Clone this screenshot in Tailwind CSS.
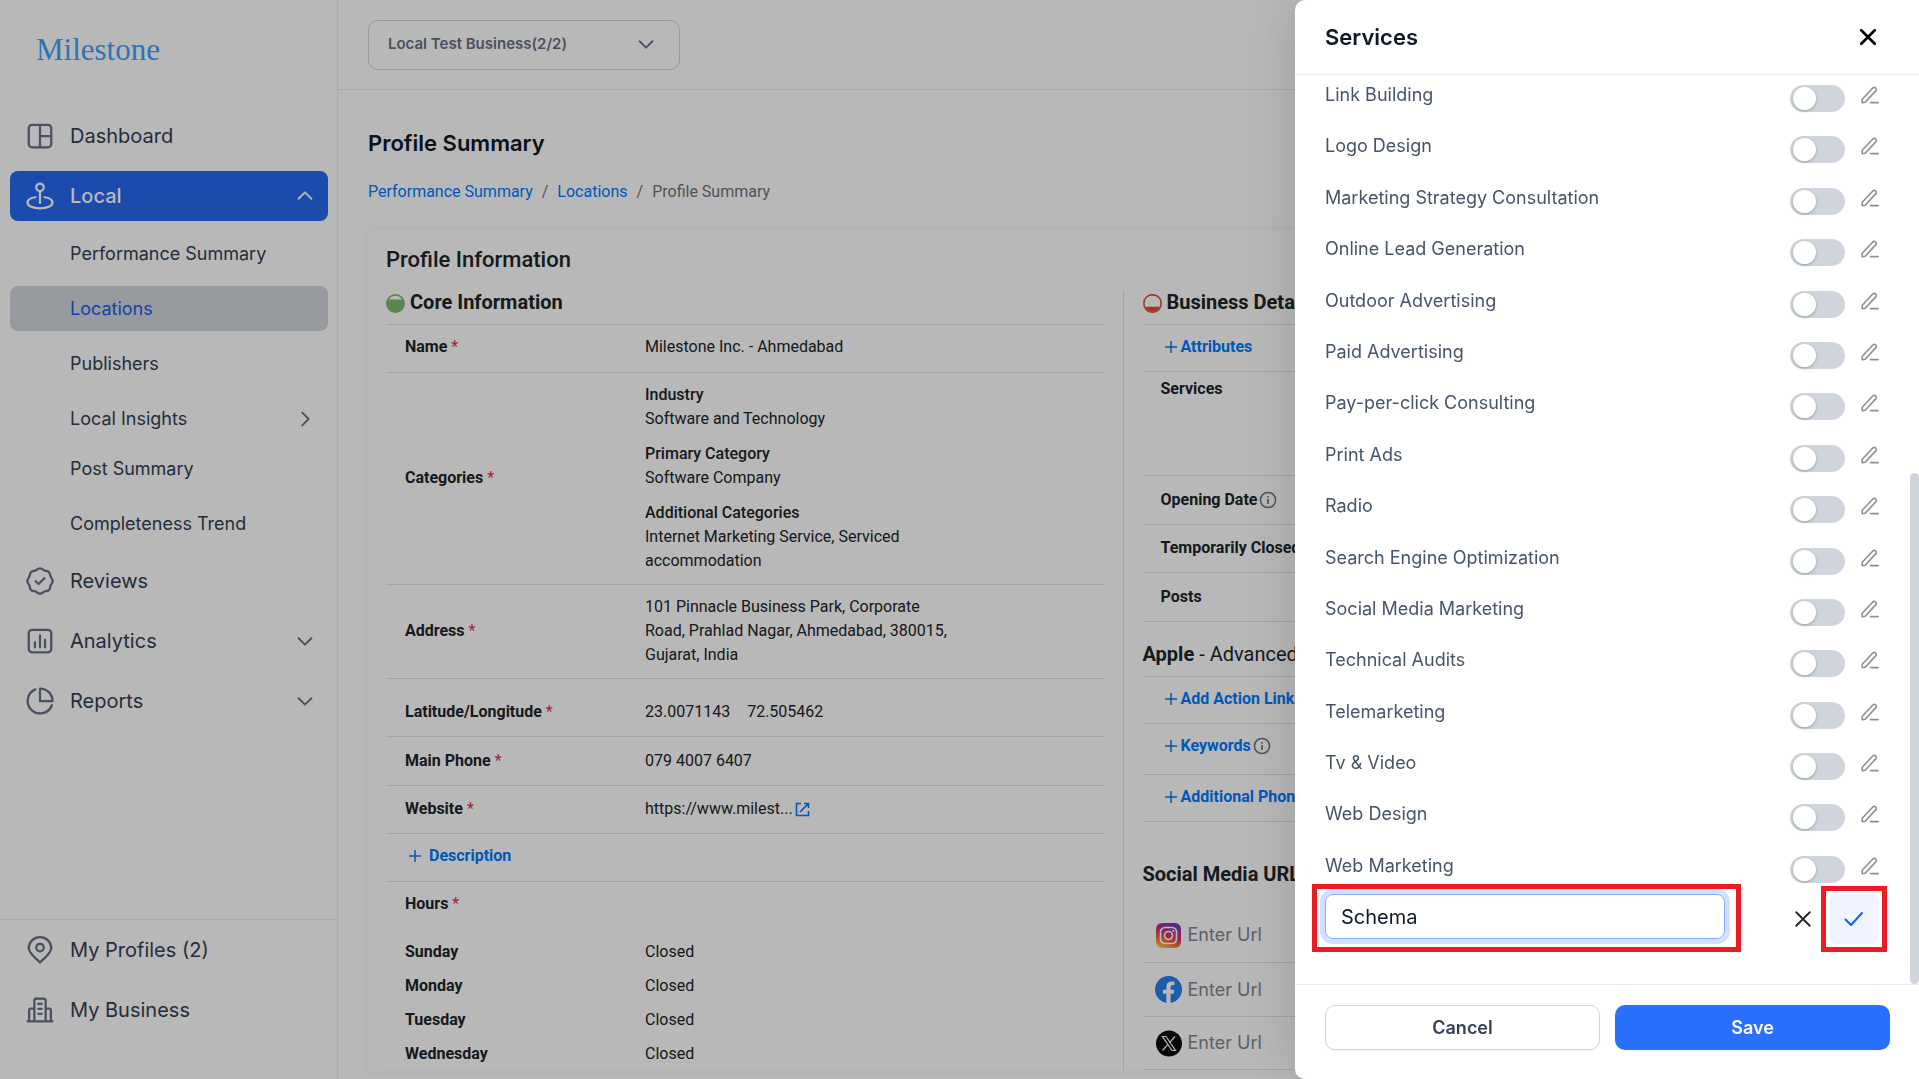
<!DOCTYPE html>
<html lang="en">
<head>
<meta charset="utf-8">
<meta name="viewport" content="width=device-width, initial-scale=1">
<title>Profile Summary</title>
<script src="https://cdn.jsdelivr.net/npm/@tailwindcss/browser@4"></script>
</head>
<body class="h-screen overflow-hidden bg-white font-['Roboto',sans-serif] text-[#212529]">
<svg class="hidden" aria-hidden="true">
  <symbol id="down" viewBox="0 0 24 24"><path d="M5 9l7 7 7-7" fill="none" stroke="currentColor" stroke-width="2" stroke-linecap="round" stroke-linejoin="round"/></symbol>
  <symbol id="plus" viewBox="0 0 12 12"><path d="M6 0v12M0 6h12" fill="none" stroke="currentColor" stroke-width="1.5"/></symbol>
  <symbol id="info" viewBox="0 0 18 18"><circle cx="9" cy="9" r="7.600" fill="none" stroke="currentColor" stroke-width="1.500"/><path d="M9 8v5M9 5v1.600" stroke="currentColor" stroke-width="1.700"/></symbol>
  <symbol id="cross" viewBox="0 0 16 16"><path d="M2 2l12 12M14 2L2 14" fill="none" stroke="currentColor" stroke-linecap="round"/></symbol>
  <symbol id="pencil" viewBox="0 0 20 20"><path d="M2.200 17.600v-3.400L12.800 3a2 2 0 0 1 2.900 0 2 2 0 0 1 0 2.900L5.200 17.200z M10.500 17.600h7.600" fill="none" stroke="currentColor" stroke-width="1.600" stroke-linecap="round" stroke-linejoin="round"/></symbol>
</svg>

<div class="flex h-full">
  <!-- Sidebar -->
  <aside class="flex w-[338px] shrink-0 flex-col border-r border-[#eaecf0] font-['Inter',sans-serif] text-[#344054]">
    <a href="#" class="flex h-[111px] items-start pt-[30px] pl-[36px] font-['Liberation_Serif',serif] text-[31px] leading-[40px] text-[#3ca1ff]">Milestone</a>
    <nav class="flex flex-1 flex-col gap-[10px] pr-[9px] pl-[10px] text-[20px]">
      <a href="#" class="flex h-[50px] shrink-0 items-center gap-[15px] pl-[15px]">
        <svg class="size-[30px] text-[#667085]" viewBox="0 0 24 24" fill="none" stroke="currentColor" stroke-width="1.800" stroke-linejoin="round"><rect x="3" y="3" width="18" height="18" rx="2.600"/><path d="M12 3v18M12 12h9"/></svg>Dashboard</a>
      <a href="#" class="flex h-[50px] shrink-0 items-center gap-[15px] rounded-lg bg-[#2468f0] px-[12px] pl-[15px] font-medium text-white">
        <svg class="size-[30px]" viewBox="0 0 24 24" fill="none" stroke="currentColor" stroke-width="1.800" stroke-linecap="round"><circle cx="12" cy="5" r="3"/><path d="M12 8v9.500M8.500 13C4.700 13.500 2 15 2 17.200 2 20 6.500 21.800 12 21.800s10-1.800 10-4.600c0-2.200-2.700-3.700-6.500-4.200"/></svg>
        <span class="flex-1">Local</span>
        <svg class="size-[22px] rotate-180"><use href="#down"/></svg></a>
      <div class="flex flex-col gap-[10px] text-[18px]">
        <a href="#" class="flex h-[45px] items-center pl-[60px]">Performance Summary</a>
        <a href="#" class="flex h-[45px] items-center rounded-lg bg-[#d2d6dc] pl-[60px] text-[#155eef]">Locations</a>
        <a href="#" class="flex h-[45px] items-center pl-[60px]">Publishers</a>
        <div class="flex flex-col gap-[5px]">
          <a href="#" class="flex h-[45px] items-center justify-between pr-[12px] pl-[60px]">Local Insights<svg class="size-[22px] -rotate-90 text-[#667085]"><use href="#down"/></svg></a>
          <a href="#" class="flex h-[45px] items-center pl-[60px]">Post Summary</a>
        </div>
        <a href="#" class="flex h-[45px] items-center pl-[60px]">Completeness Trend</a>
      </div>
      <a href="#" class="flex h-[50px] shrink-0 items-center gap-[15px] pl-[15px]">
        <svg class="size-[30px] text-[#667085]" viewBox="0 0 24 24" fill="none" stroke="currentColor" stroke-width="1.800" stroke-linecap="round" stroke-linejoin="round"><path d="M8.500 12.200 10.800 14.400 15.500 9.800M7.330 3.820C8.140 3.750 8.900 3.440 9.510 2.920C10.950 1.700 13.050 1.700 14.490 2.920C15.100 3.440 15.860 3.750 16.670 3.820C18.540 3.970 20.030 5.460 20.180 7.330C20.250 8.140 20.560 8.900 21.080 9.510C22.310 10.950 22.310 13.050 21.080 14.490C20.560 15.100 20.250 15.860 20.180 16.670C20.030 18.540 18.540 20.030 16.670 20.180C15.860 20.250 15.100 20.560 14.490 21.080C13.050 22.310 10.950 22.310 9.510 21.080C8.900 20.560 8.140 20.250 7.330 20.180C5.460 20.030 3.970 18.540 3.820 16.670C3.750 15.860 3.440 15.100 2.920 14.490C1.690 13.050 1.690 10.950 2.920 9.510C3.440 8.900 3.750 8.140 3.820 7.330C3.970 5.460 5.460 3.970 7.330 3.820Z"/></svg>Reviews</a>
      <a href="#" class="flex h-[50px] shrink-0 items-center gap-[15px] pr-[12px] pl-[15px]">
        <svg class="size-[30px] text-[#667085]" viewBox="0 0 24 24" fill="none" stroke="currentColor" stroke-width="1.800" stroke-linecap="round"><rect x="3" y="3" width="18" height="18" rx="2.600"/><path d="M8 13v4M12 7.500V17M16 11v6"/></svg>
        <span class="flex-1">Analytics</span><svg class="size-[22px] text-[#667085]"><use href="#down"/></svg></a>
      <a href="#" class="flex h-[50px] shrink-0 items-center gap-[15px] pr-[12px] pl-[15px]">
        <svg class="size-[30px] text-[#667085]" viewBox="0 0 24 24" fill="none" stroke="currentColor" stroke-width="1.800" stroke-linecap="round" stroke-linejoin="round"><path d="M8.300 2.700A10 10 0 1 0 21.500 15.400M12 2a10 10 0 0 1 10 10H12z"/></svg>
        <span class="flex-1">Reports</span><svg class="size-[22px] text-[#667085]"><use href="#down"/></svg></a>
    </nav>
    <nav class="flex flex-col gap-[10px] border-t border-[#eaecf0] px-[10px] pt-[5px] pb-[44px] text-[20px]">
      <a href="#" class="flex h-[50px] items-center gap-[15px] pl-[15px]">
        <svg class="size-[30px] text-[#667085]" viewBox="0 0 24 24" fill="none" stroke="currentColor" stroke-width="1.800" stroke-linejoin="round"><circle cx="12" cy="10" r="3"/><path d="M12 22C15 18.500 21 15 21 10.400A9 8.600 0 1 0 3 10.400C3 15 9 18.500 12 22Z"/></svg>My Profiles (2)</a>
      <a href="#" class="flex h-[50px] items-center gap-[15px] pl-[15px]">
        <svg class="size-[30px] text-[#667085]" viewBox="0 0 24 24" fill="none" stroke="currentColor" stroke-width="1.800" stroke-linecap="round" stroke-linejoin="round"><path d="M2 21h20M7.500 21V4.500A1.800 1.800 0 0 1 9.300 2.800h5.400a1.800 1.800 0 0 1 1.800 1.700V21M3.300 21V12a1.200 1.200 0 0 1 1.200-1.200h3M20.700 21V12a1.200 1.200 0 0 0-1.200-1.200h-3M10.600 7h2.800M10.600 11h2.800M10.600 15h2.800"/></svg>My Business</a>
    </nav>
  </aside>

  <!-- Page -->
  <main class="flex min-w-0 flex-1 flex-col">
    <header class="flex h-[90px] shrink-0 items-center border-b border-[#eaecf0] pl-[30px]">
      <div class="relative w-[312px] text-[#667085]">
        <select aria-label="Business" class="h-[50px] w-full appearance-none rounded-[10px] border border-[#d0d5dd] bg-white pl-[19px] font-['Inter',sans-serif] text-[15px] font-semibold"><option>Local Test Business(2/2)</option></select>
        <svg class="pointer-events-none absolute top-[13px] right-[23px] size-[22px]"><use href="#down"/></svg>
      </div>
    </header>
    <div class="flex flex-col pr-[42px] pl-[30px]">
      <h1 class="pt-[37px] font-['Inter',sans-serif] text-[22px] leading-[32px] font-semibold text-[#101828]">Profile Summary</h1>
      <nav aria-label="Breadcrumb" class="flex gap-[9px] pt-[21px] text-[16px] leading-[24px] text-[#6c757d]">
        <a href="#" class="text-[#007bff]">Performance Summary</a><span>/</span><a href="#" class="text-[#007bff]">Locations</a><span>/</span><span>Profile Summary</span>
      </nav>
      <section class="mt-[26px] rounded-md px-[18px] pt-[14px] shadow-[0_0_12px_rgba(0,0,0,0.05)]">
        <h2 class="text-[22px] leading-[32px] font-medium">Profile Information</h2>
        <div class="mt-[14px] grid grid-cols-2 text-[16px] leading-[24px]">
          <div class="pr-[19px]">
            <h3 class="flex h-[35px] items-start gap-[5px] border-b border-[#e2e3e8] text-[20px] leading-[24px] font-bold">
              <svg class="mt-[4px] size-[19px]" viewBox="0 0 19 19"><circle cx="9.500" cy="9.500" r="8.600" fill="none" stroke="#7fba6f" stroke-width="1.600"/><path d="M1.500 5.500h16a9 9 0 1 1-16 0z" fill="#7fba6f"/></svg>Core Information</h3>
            <dl>
              <div class="flex h-[48px] items-center border-b border-[#e2e3e8] pb-[3px] pl-[19px]"><dt class="w-[240px] font-bold">Name <span class="font-normal text-[#dc3545]">*</span></dt><dd>Milestone Inc. - Ahmedabad</dd></div>
              <div class="flex h-[212px] items-center border-b border-[#e2e3e8] pb-[2px] pl-[19px]"><dt class="w-[240px] font-bold">Categories <span class="font-normal text-[#dc3545]">*</span></dt>
                <dd class="flex w-[312px] flex-col gap-[11px]">
                  <div><div class="font-medium">Industry</div>Software and Technology</div>
                  <div><div class="font-medium">Primary Category</div>Software Company</div>
                  <div><div class="font-medium">Additional Categories</div>Internet Marketing Service, Serviced accommodation</div>
                </dd></div>
              <div class="flex h-[94px] items-center border-b border-[#e2e3e8] pb-[2px] pl-[19px]"><dt class="w-[240px] font-bold">Address <span class="font-normal text-[#dc3545]">*</span></dt><dd class="w-[312px]">101 Pinnacle Business Park, Corporate Road, Prahlad Nagar, Ahmedabad, 380015, Gujarat, India</dd></div>
              <div class="flex h-[58px] items-center border-b border-[#e2e3e8] pt-[8px] pl-[19px]"><dt class="w-[240px] font-bold">Latitude/Longitude <span class="font-normal text-[#dc3545]">*</span></dt><dd class="flex gap-[17px]"><span>23.0071143</span><span>72.505462</span></dd></div>
              <div class="flex h-[49px] items-center border-b border-[#e2e3e8] pl-[19px]"><dt class="w-[240px] font-bold">Main Phone <span class="font-normal text-[#dc3545]">*</span></dt><dd>079 4007 6407</dd></div>
              <div class="flex h-[48px] items-center border-b border-[#e2e3e8] pb-[2px] pl-[19px]"><dt class="w-[240px] font-bold">Website <span class="font-normal text-[#dc3545]">*</span></dt>
                <dd class="flex items-center gap-[2px]">https://www.milest...<a href="#" aria-label="Open website" class="pt-[2px] text-[#007bff]"><svg class="size-[15px]" viewBox="0 0 15 15" fill="none" stroke="currentColor" stroke-width="1.600"><path d="M6 1.500H1.500v12h12V9M9 1.500h4.500V6M13.500 1.500 5 10"/></svg></a></dd></div>
            </dl>
            <div class="flex h-[48px] items-center border-b border-[#e2e3e8] pb-[3px] pl-[23px]"><button class="flex items-center gap-[8px] font-bold text-[#007bff]"><svg class="size-[12px]"><use href="#plus"/></svg>Description</button></div>
            <h4 class="pt-[10px] pb-[19px] pl-[19px] font-bold">Hours <span class="font-normal text-[#dc3545]">*</span></h4>
            <table class="ml-[19px] text-left">
              <tr class="h-[34px]"><th class="w-[240px] font-bold">Sunday</th><td>Closed</td></tr>
              <tr class="h-[34px]"><th class="font-bold">Monday</th><td>Closed</td></tr>
              <tr class="h-[34px]"><th class="font-bold">Tuesday</th><td>Closed</td></tr>
              <tr class="h-[34px]"><th class="font-bold">Wednesday</th><td>Closed</td></tr>
            </table>
          </div>
          <div class="border-l border-[#e2e3e8] pl-[19px]">
            <h3 class="flex h-[35px] items-start gap-[5px] border-b border-[#e2e3e8] text-[20px] leading-[24px] font-bold whitespace-nowrap">
              <svg class="mt-[4px] size-[19px]" viewBox="0 0 19 19"><path d="M2 12.800h15a8.500 8.500 0 0 1-15 0z" fill="#dd4c35"/><rect x=".9" y=".9" width="17.200" height="17.200" rx="8" fill="none" stroke="#dd4c35" stroke-width="1.600"/></svg>Business Details</h3>
            <div class="flex h-[47px] items-center border-b border-[#e2e3e8] pb-[2px] pl-[22px]"><button class="flex items-center gap-[4px] font-bold text-[#007bff]"><svg class="size-[12px]"><use href="#plus"/></svg>Attributes</button></div>
            <div class="h-[104px] border-b border-[#e2e3e8] pt-[5px] pl-[18px] font-bold">Services</div>
            <div class="flex h-[49px] items-center border-b border-[#e2e3e8] pl-[18px] font-bold">Opening Date<svg class="ml-[2px] size-[18px] text-[#6c757d]"><use href="#info"/></svg></div>
            <div class="flex h-[48px] items-center border-b border-[#e2e3e8] pb-[2px] pl-[18px] font-bold">Temporarily Closed</div>
            <div class="flex h-[49px] items-center border-b border-[#e2e3e8] pl-[18px] font-bold">Posts</div>
            <h3 class="h-[55px] border-b border-[#e2e3e8] pt-[18px] text-[20px] leading-[28px]"><b>Apple</b> - Advanced</h3>
            <div class="flex h-[47px] items-center border-b border-[#e2e3e8] pb-[2px] pl-[22px]"><button class="flex items-center gap-[4px] font-bold text-[#007bff]"><svg class="size-[12px]"><use href="#plus"/></svg>Add Action Links</button></div>
            <div class="flex h-[51px] items-center border-b border-[#e2e3e8] pb-[6px] pl-[22px]"><button class="flex items-center gap-[4px] font-bold text-[#007bff]"><svg class="size-[12px]"><use href="#plus"/></svg>Keywords</button><svg class="ml-[2px] size-[18px] text-[#6c757d]"><use href="#info"/></svg></div>
            <div class="flex h-[47px] items-center border-b border-[#e2e3e8] pb-[2px] pl-[22px]"><button class="flex items-center gap-[4px] font-bold text-[#007bff]"><svg class="size-[12px]"><use href="#plus"/></svg>Additional Phones</button></div>
            <h3 class="pt-[38px] pb-[20px] text-[20px] leading-[28px] font-bold">Social Media URLs</h3>
            <label class="flex h-[55px] items-center gap-[6px] border-b border-[#e2e3e8] pl-[12px]">
              <svg class="size-[27px]" viewBox="0 0 27 27"><defs><linearGradient id="ig" x1=".2" y1="1" x2=".6" y2="0"><stop offset="0" stop-color="#ffc94a"/><stop offset=".25" stop-color="#f9783a"/><stop offset=".55" stop-color="#d9306f"/><stop offset="1" stop-color="#7438c8"/></linearGradient></defs><rect x="1" y="1" width="25" height="25" rx="6" fill="url(#ig)"/><rect x="5.500" y="5.500" width="16" height="16" rx="4.500" fill="none" stroke="#fff" stroke-width="1.700"/><circle cx="13.500" cy="13.500" r="4" fill="none" stroke="#fff" stroke-width="1.700"/><circle cx="18.300" cy="8.800" r="1.100" fill="#fff"/></svg>
              <input aria-label="Instagram" placeholder="Enter Url" class="w-40 font-['Inter',sans-serif] text-[18px] placeholder:text-[#7f8791]"></label>
            <label class="flex h-[54px] items-center gap-[6px] border-b border-[#e2e3e8] pl-[12px]">
              <svg class="size-[27px]" viewBox="0 0 27 27"><circle cx="13.500" cy="13.500" r="13.500" fill="#2a80ea"/><path d="M11.400 27v-9.300H8v-4h3.400v-3c0-3.500 2-5.300 5.200-5.300 1.400 0 2.900.25 2.900.25v3.300h-1.700c-1.700 0-2.200 1-2.200 2.100v2.650h3.700l-.6 4h-3.100V27z" fill="#fff"/></svg>
              <input aria-label="Facebook" placeholder="Enter Url" class="w-40 font-['Inter',sans-serif] text-[18px] placeholder:text-[#7f8791]"></label>
            <label class="flex h-[53px] items-center gap-[6px] border-b border-[#e2e3e8] pl-[12px]">
              <svg class="size-[27px]" viewBox="0 0 27 27"><circle cx="14" cy="13.500" r="13" fill="#0c0c0c"/><path d="M7.500 6.500h3.500l9.500 14H17zM20 6.500l-5.600 6.300M12.800 14.600 7.500 20.500" fill="none" stroke="#fff" stroke-width="1.200"/></svg>
              <input aria-label="X" placeholder="Enter Url" class="w-40 font-['Inter',sans-serif] text-[18px] placeholder:text-[#7f8791]"></label>
          </div>
        </div>
      </section>
    </div>
  </main>
</div>

<!-- Dimmed backdrop and drawer -->
<div class="fixed inset-0 bg-black/28"></div>
<section role="dialog" aria-label="Services" class="fixed inset-y-0 right-0 flex w-[624px] flex-col rounded-l-[10px] bg-white font-['Inter',sans-serif] shadow-[0_0_60px_rgba(0,0,0,0.16)]">
  <header class="flex h-[75px] shrink-0 items-center justify-between border-b border-[#eaecf0] pr-[42px] pl-[30px]">
    <h2 class="text-[22px] font-semibold text-[#101828]">Services</h2>
    <button aria-label="Close" class="text-black"><svg class="size-[18px] stroke-[2.4]"><use href="#cross"/></svg></button>
  </header>
  <div class="relative min-h-0 flex-1 overflow-hidden pl-[30px]">
    <ul id="services" class="flex h-[819px] flex-col justify-between text-[18px] text-[#475467]"></ul>
    <div class="flex items-start">
      <div class="relative w-[400px]">
        <input aria-label="Service name" value="Schema" class="h-[45px] w-full rounded-lg border border-[#84adff] px-[15px] text-[20px] text-[#101828] ring-[5px] ring-[#d1e0ff] outline-none">
        <span class="pointer-events-none absolute -top-[10px] -right-[16px] -bottom-[13px] -left-[13px] border-[5px] border-[#ed1c24]"></span>
      </div>
      <button aria-label="Discard" class="ml-[69px] flex h-[50px] w-[18px] items-center text-[#1f2328]"><svg class="size-[18px] stroke-[1.6]"><use href="#cross"/></svg></button>
      <div class="relative ml-[17px]">
        <button aria-label="Confirm" class="flex size-[50px] items-center justify-center rounded-lg bg-[#eff4ff] text-[#155eef]"><svg class="size-[20px]" viewBox="0 0 20 20" fill="none" stroke="currentColor" stroke-width="2" stroke-linecap="round" stroke-linejoin="round"><path d="M1.500 10.500 7 16 18 4"/></svg></button>
        <span class="pointer-events-none absolute -inset-[8px] border-[5px] border-[#ed1c24]"></span>
      </div>
    </div>
    <div class="absolute right-0 bottom-0 h-[511px] w-[9px] rounded-full bg-[#d0d5dd]"></div>
  </div>
  <footer class="grid grid-cols-2 gap-[15px] border-t border-[#eaecf0] pt-[20px] pr-[29px] pb-[29px] pl-[30px] text-[18px] font-semibold">
    <button class="h-[45px] rounded-[10px] border border-[#d0d5dd] bg-white text-[#344054] shadow-xs">Cancel</button>
    <button class="h-[45px] rounded-[10px] bg-[#2970ff] text-white shadow-xs">Save</button>
  </footer>
</section>
<script>
const names = ['Link Building','Logo Design','Marketing Strategy Consultation','Online Lead Generation','Outdoor Advertising','Paid Advertising','Pay-per-click Consulting','Print Ads','Radio','Search Engine Optimization','Social Media Marketing','Technical Audits','Telemarketing','Tv & Video','Web Design','Web Marketing'];
document.getElementById('services').innerHTML = names.map((n, i) => `
  <li class="flex h-12 items-start">
    <label for="s${i}" class="w-[465px] leading-[40px]">${n.replace('&', '&amp;')}</label>
    <input id="s${i}" type="checkbox" class="mt-[10px] h-[27px] w-[55px] appearance-none rounded-full bg-[#d0d5dd] p-[2px] pl-[3px] before:block before:size-[23px] before:rounded-full before:bg-white before:shadow-[0_1px_3px_rgba(16,60,50,0.35)] checked:bg-[#2970ff] checked:before:translate-x-[26px]">
    <button aria-label="Edit" class="mt-[10px] ml-[15px] text-[#8f8f8f]"><svg class="size-[20px]"><use href="#pencil"/></svg></button>
  </li>`).join('');
</script>
</body>
</html>
